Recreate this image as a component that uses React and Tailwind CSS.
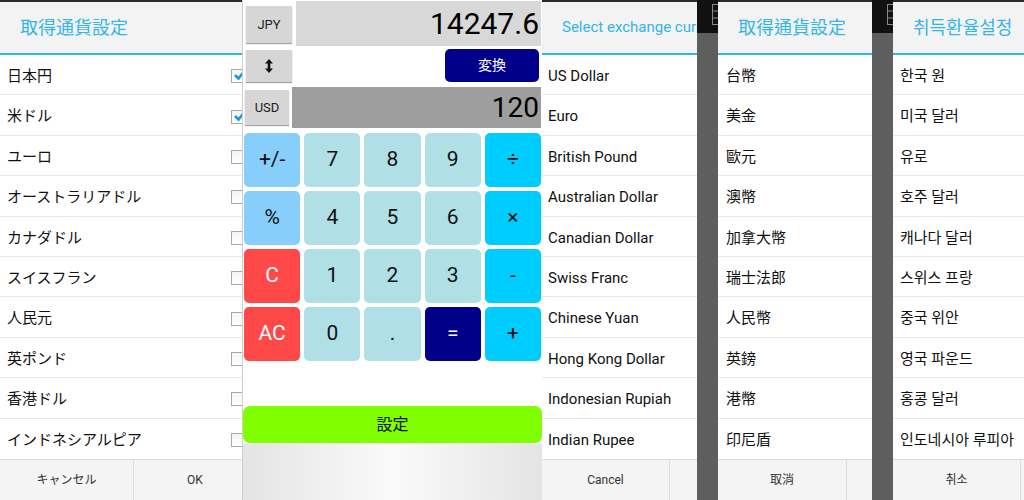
import React from 'react';

const JP = ['日本円', '米ドル', 'ユーロ', 'オーストラリアドル', 'カナダドル', 'スイスフラン', '人民元', '英ポンド', '香港ドル', 'インドネシアルピア'];
const EN = ['US Dollar', 'Euro', 'British Pound', 'Australian Dollar', 'Canadian Dollar', 'Swiss Franc', 'Chinese Yuan', 'Hong Kong Dollar', 'Indonesian Rupiah', 'Indian Rupee'];
const TC = ['台幣', '美金', '歐元', '澳幣', '加拿大幣', '瑞士法郎', '人民幣', '英鎊', '港幣', '印尼盾'];
const KR = ['한국 원', '미국 달러', '유로', '호주 달러', '캐나다 달러', '스위스 프랑', '중국 위안', '영국 파운드', '홍콩 달러', '인도네시아 루피아'];

const FONT_JP = { fontFamily: 'Roboto, "Noto Sans CJK JP", sans-serif' };
const FONT_TC = { fontFamily: 'Roboto, "Noto Sans CJK TC", sans-serif' };
const FONT_KR = { fontFamily: 'Roboto, "Noto Sans CJK KR", sans-serif' };

function CheckBox({ checked }) {
  return (
    <div className="relative w-[14px] h-[14px] border border-[#a8a8a8] bg-gradient-to-b from-[#f4f4f4] to-[#ffffff] shrink-0">
      {checked && (
        <svg className="absolute -top-[3px] left-[1px]" width="14" height="14" viewBox="0 0 14 14">
          <path d="M2 8 L5.5 11.5 L13 2" fill="none" stroke="#1a9ad6" strokeWidth="2.6" />
        </svg>
      )}
    </div>
  );
}

function Dialog({ title, titleSize, items, font, cancel, ok, leftW, innerW, visW, pad, checks }) {
  return (
    <div className="h-full overflow-hidden bg-white border-t-2 border-[#2a2a2a]" style={font}>
      <div className="flex flex-col h-full" style={{ width: innerW }}>
        <div className="h-[51px] bg-[#f3f3f3] flex items-center pl-[20px] text-[#33b5e5] shrink-0">
          <span className="whitespace-nowrap overflow-hidden" style={{ fontSize: titleSize, maxWidth: visW - 20 }}>{title}</span>
        </div>
        <div className="h-[2px] bg-[#33b5e5] shrink-0" />
        {items.map((t, i) => (
          <div
            key={t}
            className={`h-[40.4px] shrink-0 flex items-center justify-between pt-[3px] pr-[11px] text-[15px] text-[#111] whitespace-nowrap ${i < items.length - 1 ? 'border-b border-[#e8e8e8]' : ''}`}
            style={{ paddingLeft: pad }}
          >
            <span className="overflow-hidden" style={{ maxWidth: visW - pad }}>{t}</span>
            {checks && <CheckBox checked={i < 2} />}
          </div>
        ))}
        <div className="flex-1 flex border-t border-[#dcdcdc] bg-[#f4f4f4] text-[12px] text-[#333]">
          <div className="flex items-center justify-center border-r border-[#dcdcdc]" style={{ width: leftW }}>{cancel}</div>
          <div className="flex-1 flex items-center justify-center">{ok}</div>
        </div>
      </div>
    </div>
  );
}

function Strip() {
  return (
    <div className="h-full bg-[#5e5e5e] flex flex-col overflow-hidden">
      <div className="h-[33px] bg-[#111] flex justify-end items-start pt-[4px]">
        <svg width="6" height="21" viewBox="0 0 6 21">
          <rect x="0.5" y="0.5" width="12" height="20" fill="none" stroke="#888" />
          <path d="M0 7h6M0 14h6" stroke="#888" />
        </svg>
      </div>
    </div>
  );
}

function Key({ label, className }) {
  return (
    <div className={`h-[54px] rounded-[5px] flex items-center justify-center text-[21px] ${className}`}>
      {label}
    </div>
  );
}

function Calculator() {
  const keys = [
    ['+/-', 'bg-[#87cefa] text-[#111]'],
    ['7', 'bg-[#b0e0e6] text-[#111]'],
    ['8', 'bg-[#b0e0e6] text-[#111]'],
    ['9', 'bg-[#b0e0e6] text-[#111]'],
    ['÷', 'bg-[#00cdff] text-[#111]'],
    ['%', 'bg-[#87cefa] text-[#111]'],
    ['4', 'bg-[#b0e0e6] text-[#111]'],
    ['5', 'bg-[#b0e0e6] text-[#111]'],
    ['6', 'bg-[#b0e0e6] text-[#111]'],
    ['×', 'bg-[#00cdff] text-[#111]'],
    ['C', 'bg-[#ff4848] text-white'],
    ['1', 'bg-[#b0e0e6] text-[#111]'],
    ['2', 'bg-[#b0e0e6] text-[#111]'],
    ['3', 'bg-[#b0e0e6] text-[#111]'],
    ['-', 'bg-[#00cdff] text-[#111]'],
    ['AC', 'bg-[#ff4848] text-white'],
    ['0', 'bg-[#b0e0e6] text-[#111]'],
    ['.', 'bg-[#b0e0e6] text-[#111]'],
    ['=', 'bg-[#000088] text-white'],
    ['+', 'bg-[#00cdff] text-[#111]'],
  ];
  const sideBtn = 'bg-[#d6d6d6] shadow-[0_1px_1px_rgba(0,0,0,0.35)] flex items-center justify-center text-[13px] text-[#222]';

  return (
    <div className="h-full bg-white border-l border-[#cfcfcf] flex flex-col" style={FONT_JP}>
      <div className="flex items-start pt-[1px] pr-[1px]">
        <div className={`w-[46px] h-[37px] mt-[5px] ml-[3px] ${sideBtn}`}>JPY</div>
        <div className="ml-[4px] flex-1 h-[45px] bg-[#d8d8d8] flex items-center justify-end pr-[2px] text-[30px] text-black">
          14247.6
        </div>
      </div>
      <div className="flex items-start h-[41px] pr-[3px]">
        <div className={`w-[46px] h-[32px] mt-[4px] ml-[3px] ${sideBtn}`}>
          <svg width="8" height="14" viewBox="0 0 8 14">
            <path d="M4 0 L8 4.5 H5.3 V9.5 H8 L4 14 L0 9.5 H2.7 V4.5 H0 Z" fill="#111" />
          </svg>
        </div>
        <div className="ml-auto w-[94px] h-[33px] mt-[3px] rounded-[5px] bg-[#00008b] text-white text-[14px] flex items-center justify-center">
          変換
        </div>
      </div>
      <div className="flex items-start pr-[1px]">
        <div className={`w-[44px] h-[35px] mt-[3px] ml-[2px] ${sideBtn}`}>USD</div>
        <div className="ml-[3px] flex-1 h-[41px] bg-[#9e9e9e] flex items-center justify-end pr-[2px] text-[28px] text-black">
          120
        </div>
      </div>
      <div className="grid grid-cols-5 gap-[4px] pl-[1px] pr-[1px] mt-[5px]">
        {keys.map(([l, c]) => (
          <Key key={l} label={l} className={c} />
        ))}
      </div>
      <div className="mt-[45px] h-[37px] rounded-[7px] bg-[#7fff00] flex items-center justify-center text-[16px] text-[#111]">
        設定
      </div>
      <div className="flex-1 mt-[1px] bg-gradient-to-r from-[#e4e4e4] via-[#fafafa] to-[#e4e4e4]" />
    </div>
  );
}

export default function App() {
  return (
    <div className="w-[1024px] h-[500px] flex overflow-hidden bg-[#5e5e5e]">
      <div className="w-[242px] h-full shrink-0">
        <Dialog title="取得通貨設定" titleSize={18} items={JP} font={FONT_JP} cancel="キャンセル" ok="OK" leftW={134} innerW={256} visW={242} pad={7} checks />
      </div>
      <div className="w-[300px] h-full shrink-0">
        <Calculator />
      </div>
      <div className="w-[155px] h-full shrink-0">
        <Dialog title="Select exchange currency" titleSize={15} items={EN} font={FONT_JP} cancel="Cancel" ok="" leftW={128} innerW={256} visW={155} pad={6} />
      </div>
      <div className="w-[21px] h-full shrink-0">
        <Strip />
      </div>
      <div className="w-[154px] h-full shrink-0">
        <Dialog title="取得通貨設定" titleSize={18} items={TC} font={FONT_TC} cancel="取消" ok="" leftW={129} innerW={256} visW={154} pad={8} />
      </div>
      <div className="w-[21px] h-full shrink-0">
        <Strip />
      </div>
      <div className="w-[131px] h-full shrink-0">
        <Dialog title="취득환율설정" titleSize={18} items={KR} font={FONT_KR} cancel="취소" ok="" leftW={128} innerW={256} visW={131} pad={7} />
      </div>
    </div>
  );
}
